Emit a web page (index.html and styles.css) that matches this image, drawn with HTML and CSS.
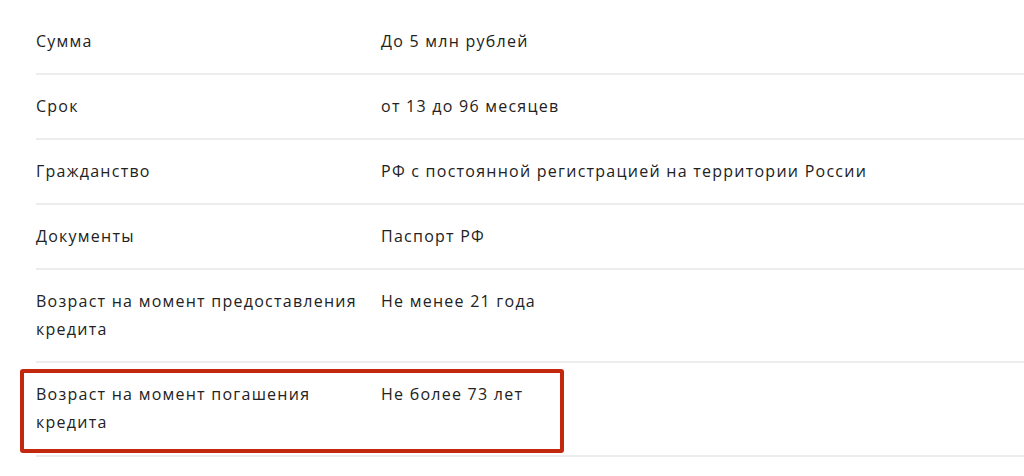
FILE: index.html
```html
<!DOCTYPE html>
<html lang="ru">
	<head>
		<meta charset="UTF-8" />
		<meta name="viewport" content="width=device-width, initial-scale=1.0" />
		<title>Условия кредита</title>
		<link rel="stylesheet" href="styles.css">
	</head>
	<body>
		<div class="conditions">
			<div class="condition-row">
				<div class="condition-label">Сумма</div>
				<div class="condition-value">До 5 млн рублей</div>
			</div>
			<div class="condition-row">
				<div class="condition-label">Срок</div>
				<div class="condition-value">от 13 до 96 месяцев</div>
			</div>
			<div class="condition-row">
				<div class="condition-label">Гражданство</div>
				<div class="condition-value">РФ с постоянной регистрацией на территории России</div>
			</div>
			<div class="condition-row">
				<div class="condition-label">Документы</div>
				<div class="condition-value">Паспорт РФ</div>
			</div>
			<div class="condition-row">
				<div class="condition-label">Возраст на момент предоставления кредита</div>
				<div class="condition-value">Не менее 21 года</div>
			</div>
			<div class="condition-row highlighted">
				<div class="condition-label">Возраст на момент погашения кредита</div>
				<div class="condition-value">Не более 73 лет</div>
				<!-- red annotation frame -->
				<span class="highlight-frame"></span>
			</div>
		</div>
	</body>
</html>
```

FILE: styles.css
```css
/* General styling */
body {
	font-family: "Open Sans", "Noto Sans", Arial, sans-serif;
	margin: 0;
	padding: 0;
	background-color: #fff;
	color: #222;
	font-size: 16px;
	letter-spacing: 1.25px;
	overflow: hidden;
}

/* Conditions list */
.conditions {
	padding: 10px 0 0 36px;
}

.condition-row {
	display: flex;
	padding: 17px 0 18px;
	line-height: 28px;
	border-bottom: 2px solid #ececec;
}

.condition-label {
	width: 330px;
	padding-right: 15px;
	flex-shrink: 0;
}

.condition-value {
	flex: 1;
}

/* Highlighted row */
.highlighted {
	position: relative;
	padding-bottom: 19px;
}

.highlight-frame {
	position: absolute;
	left: -16px;
	top: 6px;
	width: 536px;
	height: 76px;
	border: 4px solid #c3280f;
	border-radius: 3px;
}
```
